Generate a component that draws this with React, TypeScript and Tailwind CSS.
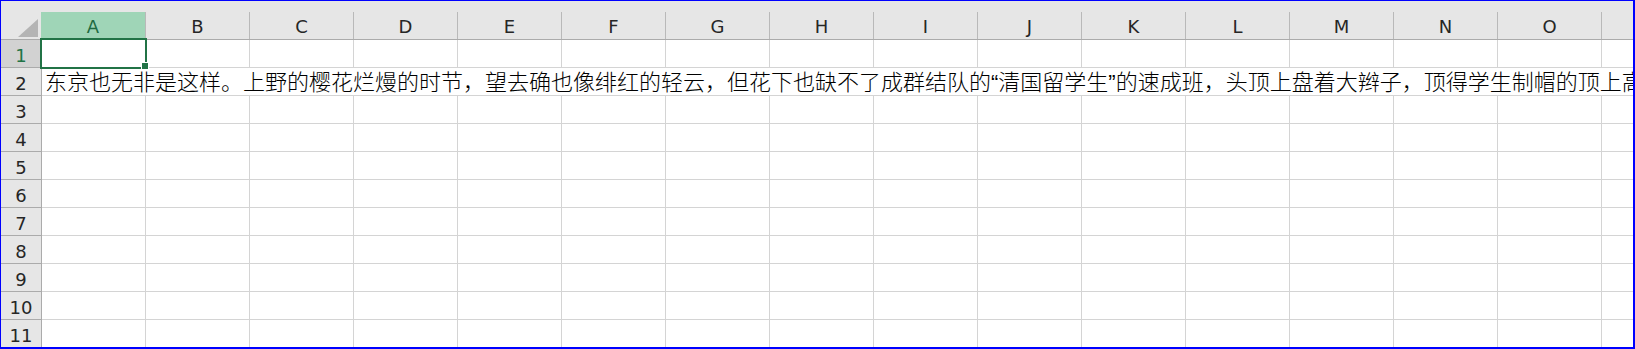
const columns = ["A", "B", "C", "D", "E", "F", "G", "H", "I", "J", "K", "L", "M", "N", "O", "P"];
const rows = [1, 2, 3, 4, 5, 6, 7, 8, 9, 10, 11];

function RowHeader({ n }: { n: number }) {
  const selected = n === 1;
  return (
    <div
      className={`flex h-full w-[41px] shrink-0 items-center justify-center border-r border-b border-[#ababab] pt-[4px] text-[18px] leading-none ${
        selected ? "bg-[#d2d2d2] text-[#217346]" : "bg-[#e6e6e6] text-[#262626]"
      }`}
    >
      {n}
    </div>
  );
}

function Quote({ ch }: { ch: string }) {
  return <span className="font-['Liberation_Sans',sans-serif]">{ch}</span>;
}

export default function App() {
  return (
    <div className="relative h-[349px] w-[1635px] overflow-hidden border-t border-l border-r-2 border-b-2 border-[#0000ff] bg-white font-['DejaVu_Sans',sans-serif]">
      {/* column headers */}
      <div className="flex h-[39px] border-b border-[#ababab] bg-[#e6e6e6]">
        <div className="relative w-[40px] shrink-0">
          <svg className="absolute left-0 top-0" width="40" height="38">
            <polygon points="17,36 37,36 37,18" fill="#b4b4b4" />
          </svg>
        </div>
        {columns.map((c, i) => (
          <div
            key={c}
            className={`flex h-[27px] shrink-0 items-center justify-center self-end border-r border-[#b9b9b9] pt-[2px] text-[18px] leading-none ${
              i === 0 ? "w-[105px] bg-[#9fd5b7] text-[#1e6b41]" : "w-[104px] text-[#262626]"
            }`}
          >
            {c}
          </div>
        ))}
      </div>

      {rows.map((n) =>
        n === 2 ? (
          <div key={n} className="flex h-[28px]">
            <RowHeader n={n} />
            <div className="flex min-w-0 flex-1 items-end overflow-hidden whitespace-nowrap border-b border-[#d4d4d4] pl-[3px] pb-[1px] font-['Noto_Sans_CJK_SC',sans-serif] text-[22px] font-light leading-none text-black">
              <span>
                东京也无非是这样。上野的樱花烂熳的时节，望去确也像绯红的轻云，但花下也缺不了成群结队的
                <Quote ch="“" />
                清国留学生
                <Quote ch="”" />
                的速成班，头顶上盘着大辫子，顶得学生制帽的顶上高
              </span>
            </div>
          </div>
        ) : (
          <div key={n} className="flex h-[28px]">
            <RowHeader n={n} />
            {columns.map((c) => (
              <div key={c} className="h-full w-[104px] shrink-0 border-r border-b border-[#d4d4d4]" />
            ))}
          </div>
        )
      )}

      {/* active cell A1 */}
      <div className="absolute left-[39px] top-[37px] h-[31px] w-[107px] border-2 border-[#217346]" />
      <div className="absolute left-[140px] top-[61px] h-[8px] w-[8px] border border-white bg-[#217346]" />
    </div>
  );
}
